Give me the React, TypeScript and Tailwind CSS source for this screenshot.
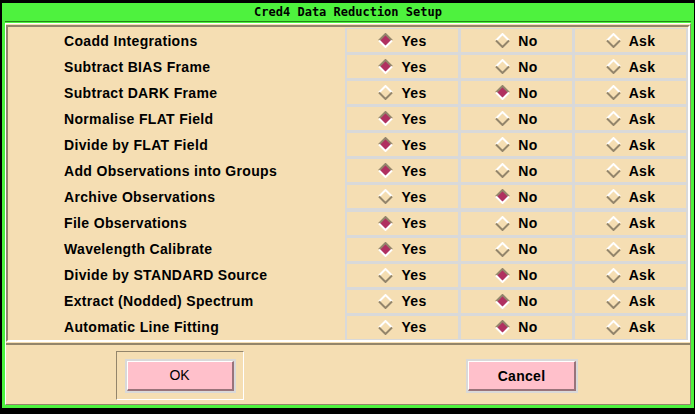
const rows: { label: string; value: 'Yes' | 'No' | 'Ask' }[] = [
  { label: 'Coadd Integrations', value: 'Yes' },
  { label: 'Subtract BIAS Frame', value: 'Yes' },
  { label: 'Subtract DARK Frame', value: 'No' },
  { label: 'Normalise FLAT Field', value: 'Yes' },
  { label: 'Divide by FLAT Field', value: 'Yes' },
  { label: 'Add Observations into Groups', value: 'Yes' },
  { label: 'Archive Observations', value: 'No' },
  { label: 'File Observations', value: 'Yes' },
  { label: 'Wavelength Calibrate', value: 'Yes' },
  { label: 'Divide by STANDARD Source', value: 'No' },
  { label: 'Extract (Nodded) Spectrum', value: 'No' },
  { label: 'Automatic Line Fitting', value: 'No' },
];

const options = ['Yes', 'No', 'Ask'] as const;

function Diamond({ on }: { on: boolean }) {
  const top = on ? '#93856b' : '#ffffff';
  const bottom = on ? '#ffffff' : '#93856b';
  return (
    <svg width="15" height="15" viewBox="0 0 15 15" className="shrink-0">
      <polygon points="1,7.5 7.5,1 14,7.5 7.5,14" fill={on ? '#b03060' : '#f5deb3'} />
      <polyline points="1,7.5 7.5,1 14,7.5" fill="none" stroke={top} strokeWidth="2" />
      <polyline points="1,7.5 7.5,14 14,7.5" fill="none" stroke={bottom} strokeWidth="2" />
    </svg>
  );
}

export default function App() {
  return (
    <div className="w-[695px] h-[414px] bg-black pl-[2px] pr-[1px] pt-[3px] pb-[6px] font-['Liberation_Sans',sans-serif] text-black">
      <div className="h-full bg-[#4ef23e] px-[3px] pb-[3px] flex flex-col">
        {/* Title bar */}
        <div className="h-[18px] flex items-center justify-center font-['DejaVu_Sans_Mono',monospace] font-bold text-[12px] leading-none">
          Cred4 Data Reduction Setup
        </div>
        <div className="h-[1px] bg-[#23861a]" />
        <div className="h-[1px]" />

        {/* Inner panel */}
        <div className="flex-1 flex flex-col bg-[#f5deb3] border-t border-l border-white border-r border-b border-r-[#93856b] border-b-[#93856b]">
          <div className="h-[1px]" />
          {/* Options table */}
          <div className="flex border-2 border-t-[#93856b] border-l-[#93856b] border-r-white border-b-white">
            <div className="w-[337px] flex flex-col gap-[3px] pt-[2px] pb-[2px]">
              {rows.map((r) => (
                <div key={r.label} className="h-[23px] flex items-center pl-[56px] text-[14px] font-bold leading-none tracking-[0.33px]">
                  {r.label}
                </div>
              ))}
            </div>
            <div className="flex-1 mt-[1px] bg-[#d9d9d9] grid grid-cols-3 gap-[3px] px-[2px] pt-[1px] pb-[1px]">
              {rows.map((r) =>
                options.map((o) => (
                  <div key={r.label + o} className="h-[23px] bg-[#f5deb3] flex items-center justify-center gap-[8px]">
                    <Diamond on={r.value === o} />
                    <span className="text-[14px] font-bold leading-none tracking-[0.3px]">{o}</span>
                  </div>
                ))
              )}
            </div>
          </div>

          {/* Buttons */}
          <div className="flex-1 mt-[1px] border-t-2 border-[#93856b] flex items-start pt-[6px]">
            <div className="ml-[110px] w-[128px] h-[49px] border border-t-[#93856b] border-l-[#93856b] border-r-white border-b-white flex items-center justify-center">
              <button className="w-[111px] h-[34px] border-2 border-[#d9d9d9] flex">
                <span className="flex-1 bg-[#ffc0cb] border-t border-l border-white border-r-2 border-b-2 border-r-[#99737a] border-b-[#99737a] flex items-center justify-center text-[14px] leading-none">
                  OK
                </span>
              </button>
            </div>
            <button className="ml-[222px] mt-[8px] w-[112px] h-[34px] border-2 border-[#d9d9d9] flex">
              <span className="flex-1 bg-[#ffc0cb] border-t border-l border-white border-r-2 border-b-2 border-r-[#99737a] border-b-[#99737a] flex items-center justify-center text-[14px] font-bold leading-none tracking-[0.3px]">
                Cancel
              </span>
            </button>
          </div>
        </div>
      </div>
    </div>
  );
}
